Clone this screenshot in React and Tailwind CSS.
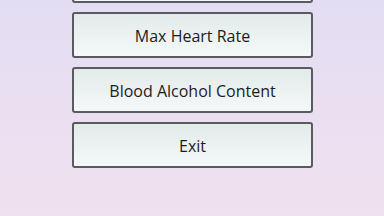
const items = ["Max Heart Rate", "Blood Alcohol Content", "Exit"];

export default function App() {
  return (
    <div
      className="w-[384px] h-[216px] overflow-hidden bg-gradient-to-b from-[#e3ddf3] to-[#f0e1ef] flex flex-col items-center"
      style={{ fontFamily: '"Open Sans", "Noto Sans", sans-serif' }}
    >
      <div className="mt-[-43px] ml-[1px] flex flex-col gap-[9px]">
        {/* top button scrolled off, only its lower edge shows */}
        <div className="w-[241px] h-[46px] rounded-[3px] border-2 border-[#5a5b5e] bg-gradient-to-b from-[#e2ebea] to-[#f5f8f9]" />
        {items.map((label) => (
          <button
            key={label}
            className="w-[241px] h-[46px] rounded-[3px] border-2 border-[#5a5b5e] bg-gradient-to-b from-[#e2ebea] to-[#f5f8f9] text-[16px] text-[#1c1c1c] flex items-center justify-center pt-[1px]"
          >
            {label}
          </button>
        ))}
      </div>
    </div>
  );
}
